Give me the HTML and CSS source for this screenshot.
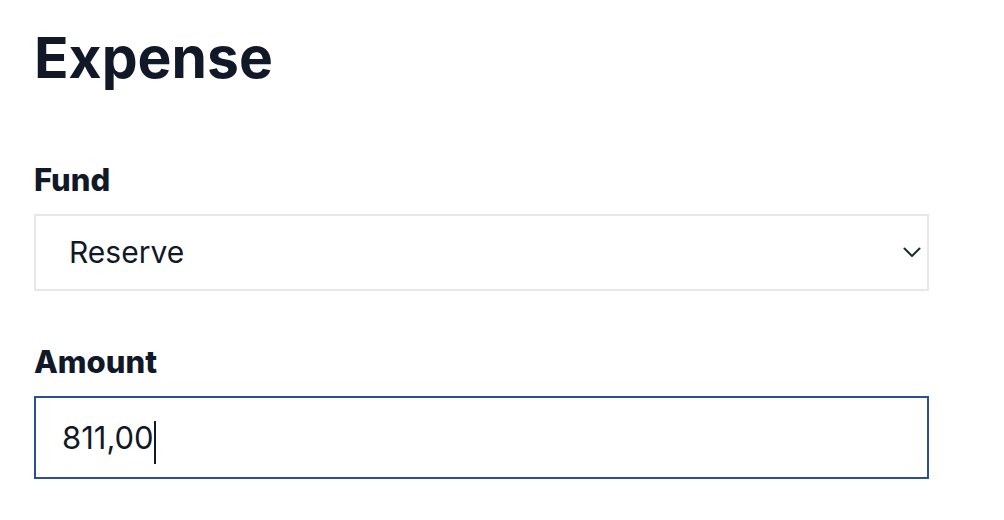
FILE: index.html
```html
<!DOCTYPE html>
<html lang="en">
<head>
    <meta charset="UTF-8">
    <meta name="viewport" content="width=device-width, initial-scale=1.0">
    <title>Expense</title>
    <link rel="stylesheet" href="styles.css">
</head>
<body>
    <div class="container">
        <h1 class="title">Expense</h1>

        <div class="field">
            <label class="field-label" for="fund">Fund</label>
            <div class="select-wrap">
                <select id="fund" class="select">
                    <option>Reserve</option>
                    <option>Operating</option>
                    <option>Savings</option>
                </select>
                <svg class="chevron" width="18" height="11" viewBox="0 0 18 11">
                    <path d="M1.5 1.5 L9 9 L16.5 1.5" fill="none" stroke="#1f2937" stroke-width="2" stroke-linecap="round" stroke-linejoin="round"/>
                </svg>
            </div>
        </div>

        <div class="field">
            <label class="field-label label-amount" for="amount">Amount</label>
            <div class="input-wrap">
                <input id="amount" class="input is-focused" type="text" value="811,00">
                <span class="caret"></span>
            </div>
        </div>
    </div>
</body>
</html>
```

FILE: styles.css
```css
body {
    font-family: Inter, "Noto Sans", Arial, sans-serif;
    background-color: #FFFFFF;
    color: #111827;
    margin: 0;
    padding: 24px 0 0 34px;
}
.container {
    width: 895px;
}
.title {
    font-size: 57px;
    font-weight: 700;
    line-height: 1.2;
    margin: 0 0 69px 0;
}
.field {
    margin-bottom: 52px;
}
.field-label {
    display: block;
    font-size: 31px;
    font-weight: 800;
    line-height: 1.2;
    margin-bottom: 15px;
}
.label-amount {
    margin-bottom: 16px;
}
.select-wrap {
    position: relative;
}
.select {
    appearance: none;
    -webkit-appearance: none;
    display: block;
    width: 100%;
    height: 77px;
    box-sizing: border-box;
    border: 2px solid #E5E7EB;
    border-radius: 0;
    background-color: #FFFFFF;
    padding: 0 60px 0 33px;
    font-family: inherit;
    font-size: 30px;
    color: #111827;
    outline: none;
}
.chevron {
    position: absolute;
    right: 8px;
    top: 33px;
    pointer-events: none;
}
.input-wrap {
    position: relative;
}
.input {
    display: block;
    width: 100%;
    height: 83px;
    box-sizing: border-box;
    border: 2px solid #E5E7EB;
    border-radius: 0;
    padding: 0 26px;
    font-family: inherit;
    font-size: 31px;
    color: #111827;
    outline: none;
}
.input.is-focused,
.input:focus {
    border-color: #2B4E9A;
}
.caret {
    position: absolute;
    left: 120px;
    top: 25px;
    width: 2px;
    height: 43px;
    background-color: #111827;
}
```
